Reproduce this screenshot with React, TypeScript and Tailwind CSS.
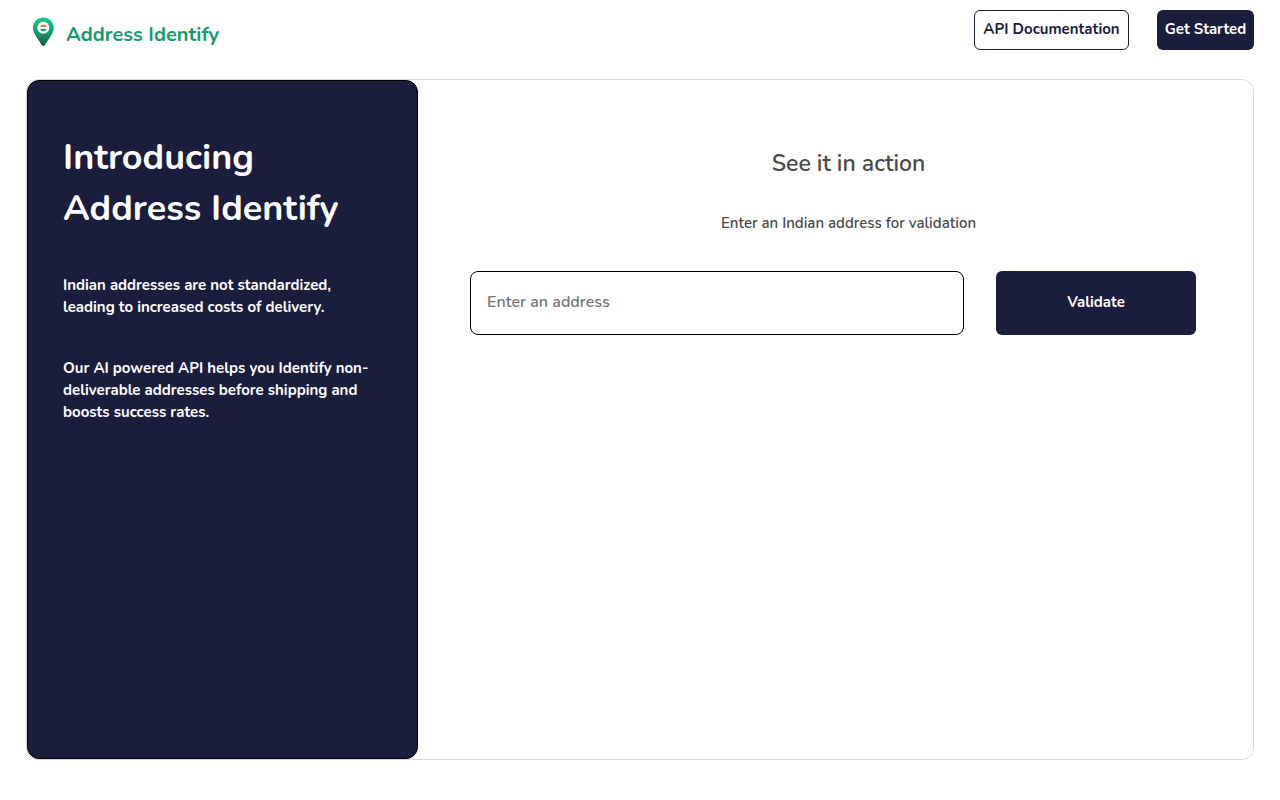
function PinLogo() {
  return (
    <svg width="22" height="30" viewBox="0 0 22 30" aria-hidden="true">
      <defs>
        <linearGradient id="pin" x1="0" y1="0" x2="0" y2="1">
          <stop offset="0" stopColor="#14cc8a" />
          <stop offset="0.5" stopColor="#18a070" />
          <stop offset="1" stopColor="#125c40" />
        </linearGradient>
      </defs>
      <path
        d="M11.3 0.4C5.5 0.4 0.9 5.1 0.9 10.9c0 3 1.2 5.2 2.9 8.1l6.1 9.2c.7 1 2.1 1 2.8 0l6.1-9.2c1.7-2.9 2.9-5.1 2.9-8.1C21.7 5.1 17.1 0.4 11.3 0.4Z"
        fill="url(#pin)"
      />
      <circle cx="11.3" cy="10.7" r="6" fill="#fff" />
      <path d="M8 10C8.5 8.4 9.8 7.6 11.3 7.6s2.8.8 3.3 2.4Z" fill="#f2743c" />
      <path d="M8 12h6.6c-.5 1.6-1.8 2.4-3.3 2.4S8.5 13.6 8 12Z" fill="#16a06c" />
    </svg>
  );
}

export default function App() {
  return (
    <div className="flex min-h-screen flex-col bg-white px-[26px] pb-10 font-['Nunito','Lato',sans-serif] text-[15px] leading-[22px]">
      <header className="flex items-start justify-between pt-2.5">
        <a href="#" className="flex items-center gap-3 pt-[5px] pl-1.5 text-xl font-bold text-[#179b6c]">
          <PinLogo />
          <span className="pt-1.5">Address Identify</span>
        </a>
        <nav className="flex gap-7">
          <a
            href="#docs"
            className="flex h-10 w-[155px] items-center justify-center rounded-md border border-[#1b1d3c] pb-0.5 font-bold text-[#1b1d3c]"
          >
            API Documentation
          </a>
          <button type="button" className="h-10 w-[97px] rounded-md bg-[#1b1d3c] pb-0.5 font-bold text-white">
            Get Started
          </button>
        </nav>
      </header>

      <main className="mt-[29px] flex flex-1 rounded-xl border border-[#d9d9d9]">
        <section className="w-[31.9%] shrink-0 rounded-xl border border-black bg-[#1b1d3c] px-[35px] pt-[51px] text-white">
          <h1 className="text-4xl leading-[51px] font-bold">
            Introducing
            <br />
            Address Identify
          </h1>
          <p className="mt-10 font-bold">
            Indian addresses are not standardized,
            <br />
            leading to increased costs of delivery.
          </p>
          <p className="mt-[39px] font-bold">
            Our AI powered API helps you Identify non-
            <br />
            deliverable addresses before shipping and
            <br />
            boosts success rates.
          </p>
        </section>

        <section className="flex-1 pt-[68px] pl-[26px] text-[#4a4a4a]">
          <h2 className="text-center text-[23px] leading-8 font-semibold">See it in action</h2>
          <label htmlFor="address" className="mt-8 block text-center font-semibold">
            Enter an Indian address for validation
          </label>
          <form className="mt-[37px] flex gap-8 pr-[57px] pl-[26px]" onSubmit={(e) => e.preventDefault()}>
            <input
              id="address"
              type="text"
              placeholder="Enter an address"
              className="h-16 min-w-0 flex-1 rounded-lg border border-black px-4 pb-0.5 text-base font-semibold text-[#1b1d3c] placeholder:text-[#757575]"
            />
            <button type="submit" className="h-16 w-[200px] rounded-md bg-[#1b1d3c] pb-0.5 font-bold text-white">
              Validate
            </button>
          </form>
        </section>
      </main>
    </div>
  );
}
